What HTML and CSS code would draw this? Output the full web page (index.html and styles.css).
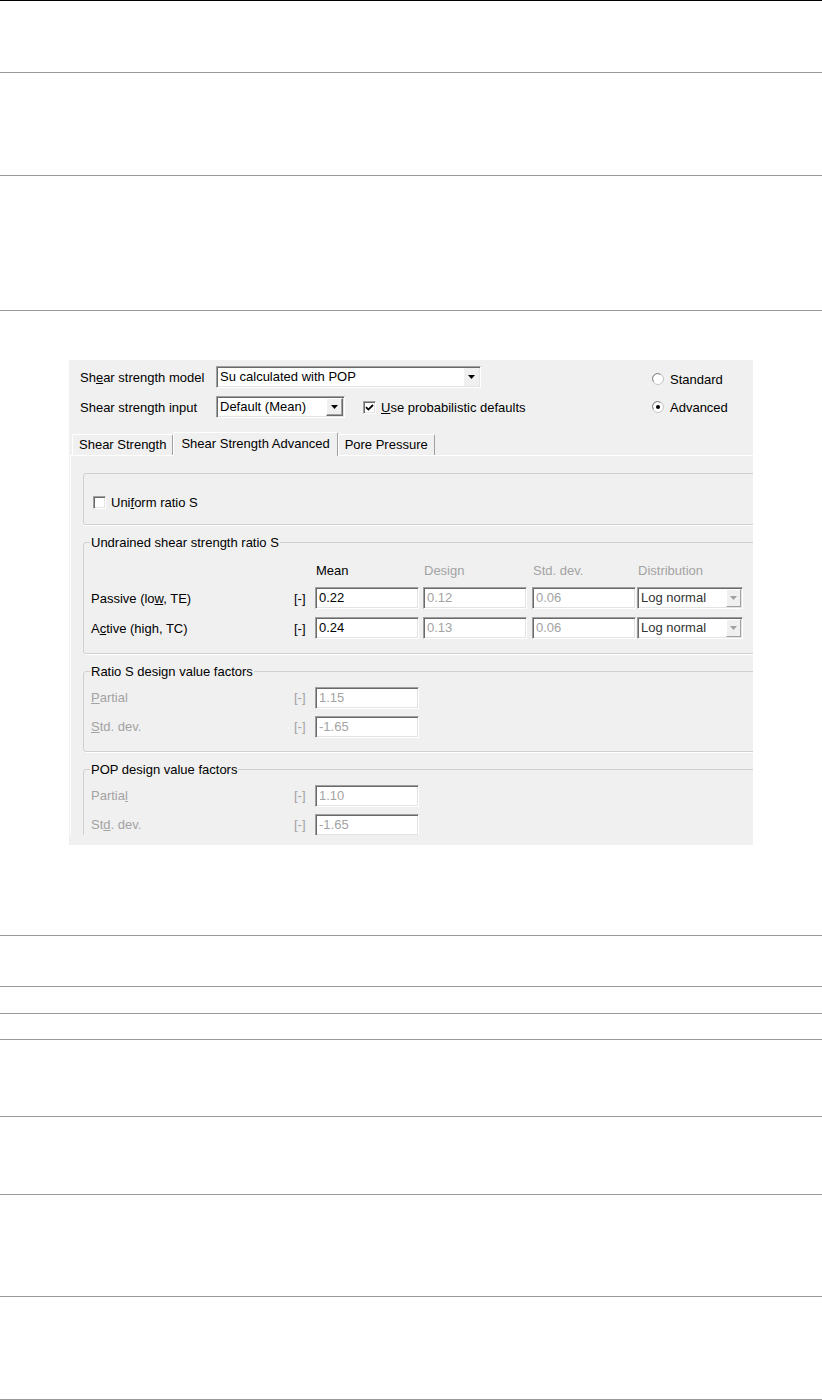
FILE: index.html
```html
<!DOCTYPE html>
<html>
<head>
<meta charset="utf-8">
<link rel="stylesheet" href="styles.css">
</head>
<body>
<div class="sheet">
	<div class="row h71"></div>
	<div class="row h102"></div>
	<div class="row h134"></div>
	<div class="row figure">
		<div class="dialog">
			<div class="head">
				<div class="head-fields">
					<div class="field">
						<span class="field-label">Sh<u>e</u>ar strength model</span>
						<div class="combo combo-model">
							<span class="combo-text">Su calculated with POP</span>
							<span class="combo-btn"><svg width="7" height="4"><path d="M0 0h7L3.5 4z" fill="#000"/></svg></span>
						</div>
					</div>
					<div class="field">
						<span class="field-label">Shear stren<u>g</u>th input</span>
						<div class="combo combo-input">
							<span class="combo-text">Default (Mean)</span>
							<span class="combo-btn raised"><svg width="7" height="4"><path d="M0 0h7L3.5 4z" fill="#000"/></svg></span>
						</div>
						<span class="check check-prob"><svg width="9" height="9"><path d="M1 4.2l2.4 2.4L8 2" fill="none" stroke="#000" stroke-width="1.8"/></svg></span>
						<span><u>U</u>se probabilistic defaults</span>
					</div>
				</div>
				<div class="head-radios">
					<div class="radio-row">
						<svg width="12" height="12"><circle cx="6" cy="6" r="5.5" fill="#fff" stroke="#c4c4c4"/><path d="M1.5 8.5A5 5 0 0 1 8.5 1.5" fill="none" stroke="#8a8a8a"/></svg>
						<span>Standard</span>
					</div>
					<div class="radio-row">
						<svg width="12" height="12"><circle cx="6" cy="6" r="5.5" fill="#fff" stroke="#c4c4c4"/><path d="M1.5 8.5A5 5 0 0 1 8.5 1.5" fill="none" stroke="#8a8a8a"/><circle cx="6" cy="6" r="2" fill="#000"/></svg>
						<span>Advanced</span>
					</div>
				</div>
			</div>

			<div class="tabs">
				<div class="tab">Shear Strength</div>
				<div class="tab active">Shear Strength Advanced</div>
				<div class="tab">Pore Pressure</div>
			</div>

			<div class="panel">
				<div class="group group-plain">
					<span class="check"></span>
					<span>Uni<u>f</u>orm ratio S</span>
				</div>

				<fieldset class="group group-ratio">
					<legend>Undrained shear strength ratio S</legend>
					<div class="grid-row ratio-head">
						<span></span>
						<span></span>
						<span class="col-head">Mean</span>
						<span class="col-head dim">Design</span>
						<span class="col-head dim">Std. dev.</span>
						<span class="col-head dim">Distribution</span>
					</div>
					<div class="grid-row ratio-row">
						<span>Passive (lo<u>w</u>, TE)</span>
						<span>[-]</span>
						<span class="input">0.22</span>
						<span class="input dim">0.12</span>
						<span class="input dim">0.06</span>
						<div class="combo combo-dist">
							<span class="combo-text">Log normal</span>
							<span class="combo-btn raised off"><svg width="7" height="4"><path d="M0 0h7L3.5 4z" fill="#a0a0a0"/></svg></span>
						</div>
					</div>
					<div class="grid-row ratio-row">
						<span>A<u>c</u>tive (high, TC)</span>
						<span>[-]</span>
						<span class="input">0.24</span>
						<span class="input dim">0.13</span>
						<span class="input dim">0.06</span>
						<div class="combo combo-dist">
							<span class="combo-text">Log normal</span>
							<span class="combo-btn raised off"><svg width="7" height="4"><path d="M0 0h7L3.5 4z" fill="#a0a0a0"/></svg></span>
						</div>
					</div>
				</fieldset>

				<fieldset class="group group-factors">
					<legend>Ratio S design value factors</legend>
					<div class="grid-row factor-row dim">
						<span><u>P</u>artial</span>
						<span>[-]</span>
						<span class="input">1.15</span>
					</div>
					<div class="grid-row factor-row dim">
						<span><u>S</u>td. dev.</span>
						<span>[-]</span>
						<span class="input">-1.65</span>
					</div>
				</fieldset>

				<fieldset class="group group-factors">
					<legend>POP design value factors</legend>
					<div class="grid-row factor-row dim">
						<span>Partia<u>l</u></span>
						<span>[-]</span>
						<span class="input">1.10</span>
					</div>
					<div class="grid-row factor-row dim">
						<span>St<u>d</u>. dev.</span>
						<span>[-]</span>
						<span class="input">-1.65</span>
					</div>
				</fieldset>
			</div>
		</div>
	</div>
	<div class="row h50"></div>
	<div class="row h26"></div>
	<div class="row h25"></div>
	<div class="row h76"></div>
	<div class="row h77"></div>
	<div class="row h101"></div>
	<div class="row h102"></div>
</div>
</body>
</html>
```
FILE: styles.css
```css
body
{
	margin: 0;
	background: #fff;
	font-family: "Liberation Sans", Arial, sans-serif;
}

.sheet
{
	border-top: 1px solid #000;
}

.row
{
	border-bottom: 1px solid #999;
}

.h25 { height: 25px; }
.h26 { height: 26px; }
.h50 { height: 50px; }
.h71 { height: 71px; }
.h76 { height: 76px; }
.h77 { height: 77px; }
.h101 { height: 101px; }
.h102 { height: 102px; }
.h134 { height: 134px; }

.figure
{
	height: 575px;
	padding: 49px 0 0 69px;
}

/* the dialog screenshot */
.dialog
{
	width: 684px;
	height: 485px;
	background: #f0f0f0;
	overflow: hidden;
	font-size: 13px;
	line-height: 15px;
	color: #000;
}

.dim
{
	color: #a3a3a3;
}

.head
{
	display: flex;
	height: 60px;
	padding-top: 2px;
}

.head-fields
{
	width: 583px;
	box-sizing: border-box;
	padding-left: 11px;
}

.field
{
	display: flex;
	align-items: center;
	height: 30px;
	white-space: nowrap;
}

.field-label
{
	width: 136px;
}

.head-radios
{
	padding-top: 3px;
}

.radio-row
{
	display: flex;
	align-items: center;
	gap: 6px;
	height: 28px;
}

/* sunken 3d boxes */
.combo, .input, .check
{
	box-sizing: border-box;
	background: #fff;
	border: 1px solid;
	border-color: #a0a0a0 #fff #fff #a0a0a0;
	box-shadow: inset 1px 1px 0 #696969, inset -1px -1px 0 #e3e3e3;
}

.combo
{
	display: flex;
	height: 22px;
	padding: 1px;
}

.combo-model { width: 265px; }
.combo-input { width: 129px; }
.combo-dist { width: 106px; color: #333; }

.combo-text
{
	flex: 1;
	padding-left: 2px;
	line-height: 18px;
	white-space: nowrap;
	overflow: hidden;
}

.combo-btn
{
	display: flex;
	align-items: center;
	justify-content: center;
	width: 15px;
	background: #f0f0f0;
}

.combo-btn.raised
{
	box-sizing: border-box;
	width: 17px;
	border: 1px solid;
	border-color: #fff #696969 #696969 #fff;
	box-shadow: inset -1px -1px 0 #a0a0a0;
}

.combo-btn.off
{
	width: 15px;
	border-color: #fff #a0a0a0 #a0a0a0 #fff;
	box-shadow: none;
}

.check
{
	display: inline-flex;
	align-items: center;
	justify-content: center;
	flex: none;
	width: 13px;
	height: 13px;
}

.check-prob
{
	margin: 0 5px 0 18px;
}

/* tabs */
.tabs
{
	display: flex;
	align-items: flex-end;
	height: 23px;
	margin-top: 10px;
	padding-left: 3px;
	position: relative;
	z-index: 1;
}

.tab
{
	box-sizing: border-box;
	height: 21px;
	padding: 0 6px;
	line-height: 20px;
	white-space: nowrap;
	border: 1px solid;
	border-bottom: 0;
	border-color: #fff #a0a0a0 transparent #fff;
	border-radius: 2px 2px 0 0;
}

.tab.active
{
	height: 24px;
	margin-bottom: -1px;
	padding: 0 7px;
	line-height: 22px;
	background: #f0f0f0;
}

.panel
{
	box-sizing: border-box;
	height: 380px;
	margin-left: 1px;
	padding: 17px 0 0 12px;
	border-top: 1px solid #fff;
	border-left: 1px solid #fff;
	overflow: hidden;
}

/* group boxes */
.group
{
	box-sizing: border-box;
	width: 690px;
	margin: 0;
	border: 1px solid #d0d0d0;
	border-radius: 3px;
	box-shadow: 1px 1px 0 #fff;
}

.group-plain
{
	display: flex;
	align-items: center;
	gap: 5px;
	height: 52px;
	padding: 6px 0 0 9px;
}

fieldset.group
{
	min-width: 0;
	margin-top: 10px;
	padding: 0 0 10px 7px;
}

.group legend
{
	padding: 0 1px;
	margin-left: -1px;
	line-height: 15px;
}

.group-factors
{
	padding-bottom: 11px;
}

.grid-row
{
	display: grid;
	grid-template-columns: 203px 21px 108px 109px 105px 106px;
	align-items: center;
	white-space: nowrap;
}

.ratio-head
{
	height: 15px;
	margin: 13px 0 5px;
}

.col-head
{
	padding-left: 1px;
}

.ratio-row
{
	height: 30px;
}

.factor-row
{
	height: 29px;
}

.group-factors legend + .factor-row
{
	margin-top: 4px;
}

.input
{
	width: 104px;
	height: 22px;
	padding: 1px 1px 1px 3px;
	line-height: 18px;
}
```
